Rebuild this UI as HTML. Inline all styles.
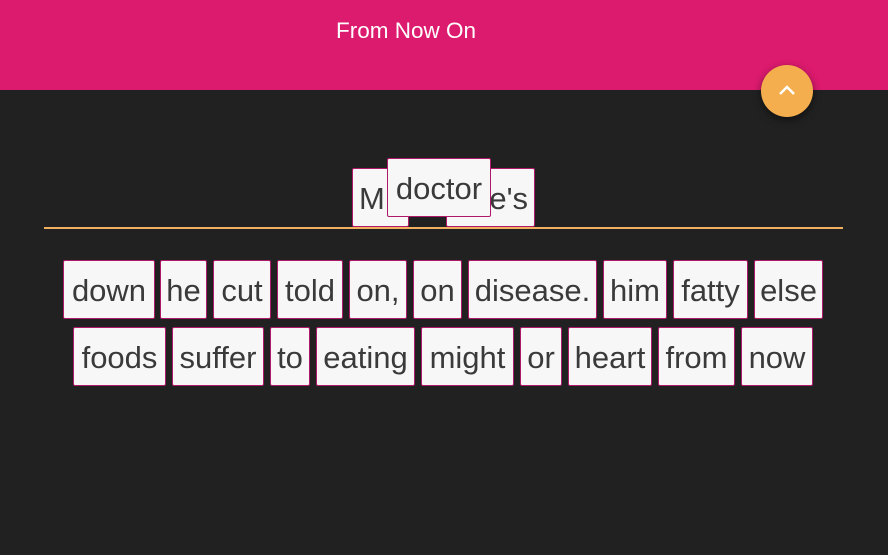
<!DOCTYPE html>
<html><head><style>
body{margin:0;width:888px;height:555px;background:#212121;position:relative;overflow:hidden;font-family:"Liberation Sans",sans-serif}
.hd{position:absolute;left:0;top:0;width:888px;height:90px;background:#dc1a6e}
.tt{position:absolute;left:336px;top:18px;color:#fff;font-size:22.5px}
.fab{position:absolute;left:761px;top:65px;width:52px;height:52px;border-radius:50%;background:#f5ae4e;box-shadow:0 3px 8px rgba(0,0,0,.5)}
.b{position:absolute;box-sizing:border-box;background:#f7f7f7;border:1px solid #b0196a;border-radius:2px;color:#3a3a3a;font-size:31px;display:flex;align-items:center;justify-content:center;height:59px;padding-top:2px}
.line{position:absolute;left:44px;top:227px;width:799px;height:2px;background:#f0b060}
</style></head><body>
<div class="hd"></div><div class="tt">From Now On</div>
<div class="fab"><svg width="52" height="52"><path d="M19 29 L26 22 L33 29" stroke="#fff" stroke-width="2.5" fill="none"/></svg></div>
<div class="b" style="left:352px;top:168px;width:57px;justify-content:flex-start;padding-left:6px">M</div>
<div class="b" style="left:446px;top:168px;width:89px;justify-content:flex-end;padding-right:6px">e's</div>
<div class="b" style="left:387px;top:158px;width:104px">doctor</div>
<div class="line"></div>
<div class="b" style="left:63px;top:260px;width:92px">down</div>
<div class="b" style="left:160px;top:260px;width:47px">he</div>
<div class="b" style="left:213px;top:260px;width:58px">cut</div>
<div class="b" style="left:277px;top:260px;width:66px">told</div>
<div class="b" style="left:349px;top:260px;width:58px">on,</div>
<div class="b" style="left:413px;top:260px;width:49px">on</div>
<div class="b" style="left:468px;top:260px;width:129px">disease.</div>
<div class="b" style="left:603px;top:260px;width:64px">him</div>
<div class="b" style="left:673px;top:260px;width:75px">fatty</div>
<div class="b" style="left:754px;top:260px;width:69px">else</div>
<div class="b" style="left:73px;top:327px;width:93px">foods</div>
<div class="b" style="left:172px;top:327px;width:92px">suffer</div>
<div class="b" style="left:270px;top:327px;width:40px">to</div>
<div class="b" style="left:316px;top:327px;width:99px">eating</div>
<div class="b" style="left:421px;top:327px;width:93px">might</div>
<div class="b" style="left:520px;top:327px;width:42px">or</div>
<div class="b" style="left:568px;top:327px;width:84px">heart</div>
<div class="b" style="left:658px;top:327px;width:77px">from</div>
<div class="b" style="left:741px;top:327px;width:72px">now</div>
</body></html>
